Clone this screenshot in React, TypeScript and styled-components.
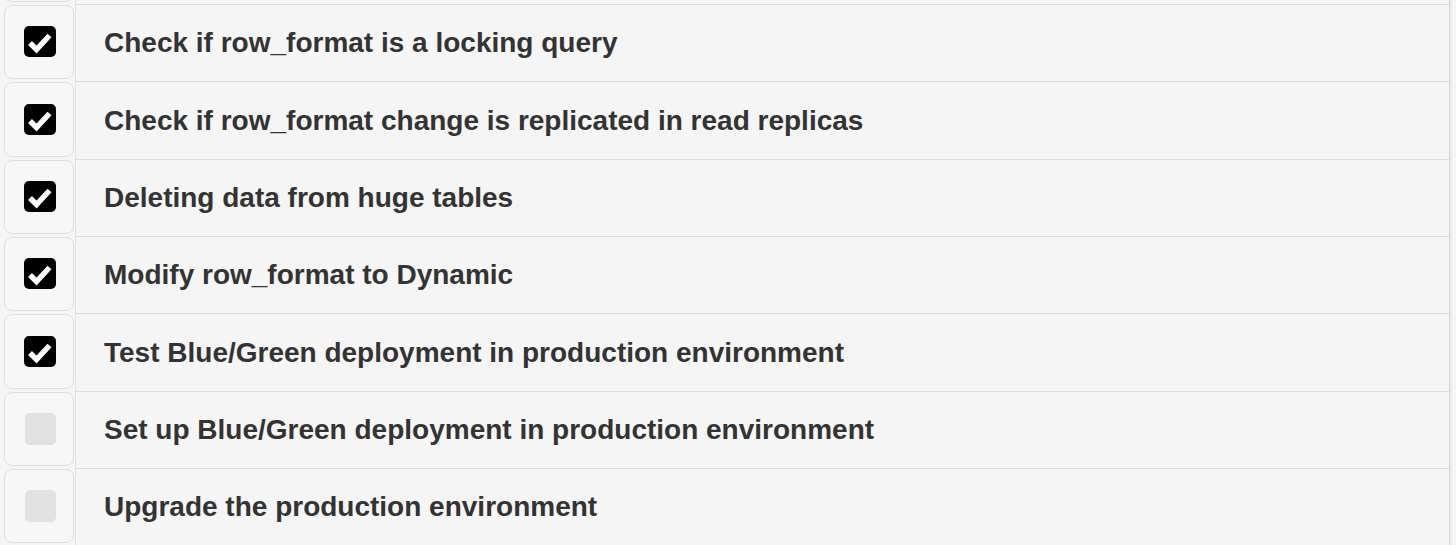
import styled, { createGlobalStyle } from "styled-components";

interface Task {
  label: string;
  done: boolean;
}

// the first row is the one scrolled off above the view
const tasks: Task[] = [
  { label: "", done: true },
  { label: "Check if row_format is a locking query", done: true },
  { label: "Check if row_format change is replicated in read replicas", done: true },
  { label: "Deleting data from huge tables", done: true },
  { label: "Modify row_format to Dynamic", done: true },
  { label: "Test Blue/Green deployment in production environment", done: true },
  { label: "Set up Blue/Green deployment in production environment", done: false },
  { label: "Upgrade the production environment", done: false },
];

const GlobalStyle = createGlobalStyle`
  html, body {
    margin: 0;
    padding: 0;
    background: #f5f5f5;
    overflow: hidden;
  }
  body {
    font-family: "Liberation Sans", Arial, sans-serif;
  }
`;

const CheckBox = ({ checked }: { checked: boolean }) => (
  <CheckSvg width="32" height="32" viewBox="0 0 32 32">
    {checked ? (
      <>
        <rect x="0" y="0" width="32" height="31" rx="5" fill="#000" />
        <polyline
          points="6,17 12.5,23.5 25.5,9.5"
          fill="none"
          stroke="#fff"
          strokeWidth="5.5"
          strokeLinejoin="miter"
        />
      </>
    ) : (
      <rect x="1" y="0" width="31" height="32" rx="5" fill="#e1e1e1" />
    )}
  </CheckSvg>
);

const App = () => {
  return (
    <>
      <GlobalStyle />
      <Page>
        <TaskList>
          {tasks.map((task, i) => (
            <TaskRow key={i}>
              <CheckCell>
                <CheckBox checked={task.done} />
              </CheckCell>
              <LabelCell>{task.label}</LabelCell>
            </TaskRow>
          ))}
        </TaskList>
      </Page>
    </>
  );
};

export default App;

const Page = styled.div`
  width: 1456px;
  height: 545px;
  overflow: hidden;
  background: #f5f5f5;
`;

const TaskList = styled.div`
  margin-top: -73.3px;
  width: 1449px;
  border-right: 1px solid #d9d9d9;
  box-shadow: 2px 0 0 #ececec;
`;

const TaskRow = styled.div`
  display: flex;
  height: 77.33px;
`;

const CheckCell = styled.div`
  width: 70px;
  flex-shrink: 0;
  margin: 1px 1px 2px 4px;
  box-sizing: border-box;
  border: 1px solid #dedede;
  border-radius: 8px;
  background: #f7f7f7;
  display: flex;
  align-items: center;
  justify-content: center;
  padding-left: 2px;
`;

const CheckSvg = styled.svg`
  display: block;
`;

const LabelCell = styled.div`
  flex: 1;
  display: flex;
  align-items: center;
  padding-left: 28px;
  border-top: 1px solid #dadada;
  border-left: 1px solid #e2e2e2;
  font-size: 28px;
  font-weight: 700;
  color: #333;
  white-space: nowrap;
`;
